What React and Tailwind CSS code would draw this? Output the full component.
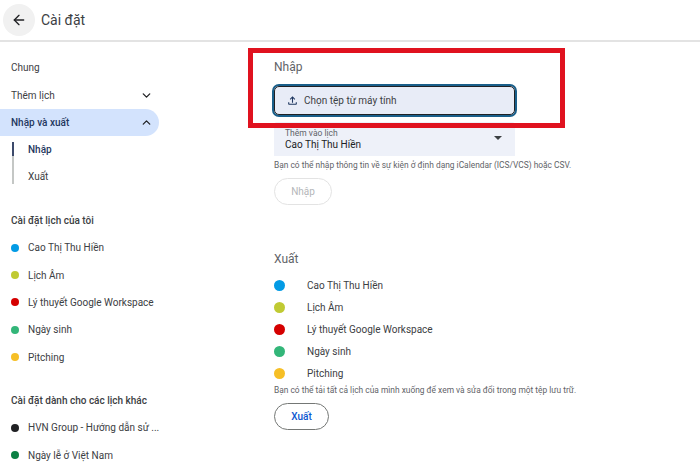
import React from "react";
import { ArrowLeft, ChevronDown, ChevronUp } from "lucide-react";

const myCalendars = [
  { name: "Cao Thị Thu Hiền", dot: "bg-[#039be5]" },
  { name: "Lịch Âm", dot: "bg-[#c0ca33]" },
  { name: "Lý thuyết Google Workspace", dot: "bg-[#d50000]" },
  { name: "Ngày sinh", dot: "bg-[#33b679]" },
  { name: "Pitching", dot: "bg-[#f6bf26]" },
];

const otherCalendars = [
  { name: "HVN Group - Hướng dẫn sử ...", dot: "bg-[#202124]" },
  { name: "Ngày lễ ở Việt Nam", dot: "bg-[#0b8043]" },
];

const SideCalendar = ({ name, dot }) => (
  <div className="flex h-[27.4px] items-center pl-[11px]">
    <span className={`h-2 w-2 rounded-full ${dot}`} />
    <span className="ml-[9px] text-[10px] text-[#3c4043]">{name}</span>
  </div>
);

const Sidebar = () => (
  <aside className="w-[246px] shrink-0 overflow-hidden pt-[12px]">
    <div className="flex h-[27.4px] items-center pl-[11px] text-[10px] text-[#3c4043]">Chung</div>
    <div className="flex h-[27.4px] w-[159px] items-center justify-between pl-[11px] pr-[6px] text-[10px] text-[#3c4043]">
      Thêm lịch
      <ChevronDown size={13} strokeWidth={2.4} className="text-[#202124]" />
    </div>
    <div className="flex h-[27px] w-[159px] items-center justify-between rounded-r-full bg-[#d3e3fd] pl-[11px] pr-[6px] text-[10px] font-medium">
      <span className="text-[#1f3760]">Nhập và xuất</span>
      <ChevronUp size={13} strokeWidth={2.4} className="text-[#202124]" />
    </div>
    <div className="ml-[12px] mt-[6px] flex">
      <div className="flex h-[42px] w-[2px] flex-col bg-[#c4c7c5]">
        <div className="h-[14px] bg-[#3c4a6b]" />
      </div>
      <div className="-mt-[6px] ml-[14px] text-[10px]">
        <div className="flex h-[27.4px] items-center font-medium text-[#1f3760]">Nhập</div>
        <div className="flex h-[27.4px] items-center text-[#3c4043]">Xuất</div>
      </div>
    </div>
    <div className="mt-[16px] flex h-[27.4px] items-center pl-[11px] text-[10px] font-medium text-[#3c4043]">Cài đặt lịch của tôi</div>
    {myCalendars.map((c) => (
      <SideCalendar key={c.name} {...c} />
    ))}
    <div className="mt-[16px] flex h-[27.4px] items-center pl-[11px] text-[10px] font-medium text-[#3c4043]">Cài đặt dành cho các lịch khác</div>
    {otherCalendars.map((c) => (
      <SideCalendar key={c.name} {...c} />
    ))}
  </aside>
);

const Main = () => (
  <main className="flex-1 pl-[28px]">
    <h2 className="mt-[16px] text-[12px] leading-[18px] text-[#5f6368]">Nhập</h2>
    <div className="-ml-[2px] mt-[8px] flex h-[33px] w-[245px] items-center rounded-[7px] border-[2px] border-[#1a5f8a] bg-[#e8ecf7] pl-[12px] text-[10px] text-[#3c4043] outline outline-1 -outline-offset-[3px] outline-[#202124]">
      <svg width="13" height="13" viewBox="0 0 24 24" fill="#1f3760">
        <path d="M18 15v3H6v-3H4v3c0 1.1.9 2 2 2h12c1.1 0 2-.9 2-2v-3h-2zM7 9l1.41 1.41L11 7.83V16h2V7.83l2.59 2.58L17 9l-5-5-5 5z" />
      </svg>
      <span className="ml-[5px]">Chọn tệp từ máy tính</span>
    </div>
    <div className="relative mt-[5px] flex h-[34px] w-[241px] flex-col justify-end rounded-t-[3px] bg-[#eef1f9] pb-[4px] pl-[11px]">
      <div className="text-[8.5px] leading-[10px] text-[#5f6368]">Thêm vào lịch</div>
      <div className="text-[10px] leading-[14px] text-[#202124]">Cao Thị Thu Hiền</div>
      <span className="absolute right-[13px] top-[14px] h-0 w-0 border-x-[4px] border-t-[4px] border-x-transparent border-t-[#3c4043]" />
    </div>
    <p className="mt-[1px] text-[8.4px] leading-[16px] whitespace-nowrap text-[#5f6368]">Bạn có thể nhập thông tin về sự kiện ở định dạng iCalendar (ICS/VCS) hoặc CSV.</p>
    <button className="mt-[5px] flex h-[27px] w-[58px] items-center justify-center rounded-full border border-[#e3e3e3] text-[10px] text-[#b4b6b9]">Nhập</button>
    <h2 className="mt-[45px] text-[12px] leading-[18px] text-[#5f6368]">Xuất</h2>
    <div className="mt-[6px]">
      {myCalendars.map((c) => (
        <div key={c.name} className="flex h-[22px] items-center">
          <span className={`h-[11px] w-[11px] rounded-full ${c.dot}`} />
          <span className="ml-[22px] text-[10px] text-[#3c4043]">{c.name}</span>
        </div>
      ))}
    </div>
    <p className="-mt-[1px] text-[8.4px] leading-[14px] whitespace-nowrap text-[#5f6368]">Bạn có thể tải tất cả lịch của mình xuống để xem và sửa đổi trong một tệp lưu trữ.</p>
    <button className="mt-[6px] flex h-[27px] w-[55px] items-center justify-center rounded-full border border-[#747775] text-[10px] font-medium text-[#0b57d0]">Xuất</button>
  </main>
);

export default function App() {
  return (
    <div className="relative h-[467px] w-[700px] overflow-hidden bg-white font-['Roboto',sans-serif]">
      <header className="flex h-[42px] items-center border-b-2 border-[#e3e3e3] pl-[3px]">
        <div className="flex h-[32px] w-[32px] items-center justify-center rounded-full bg-[#f1f1f1]">
          <ArrowLeft size={16} strokeWidth={2} className="text-[#202124]" />
        </div>
        <h1 className="ml-[6px] text-[14px] text-[#3c4043]">Cài đặt</h1>
      </header>
      <div className="flex">
        <Sidebar />
        <Main />
      </div>
      {/* red annotation box */}
      <div className="absolute left-[248px] top-[48px] h-[80px] w-[317px] border-[5px] border-[#e0121f]" />
    </div>
  );
}
